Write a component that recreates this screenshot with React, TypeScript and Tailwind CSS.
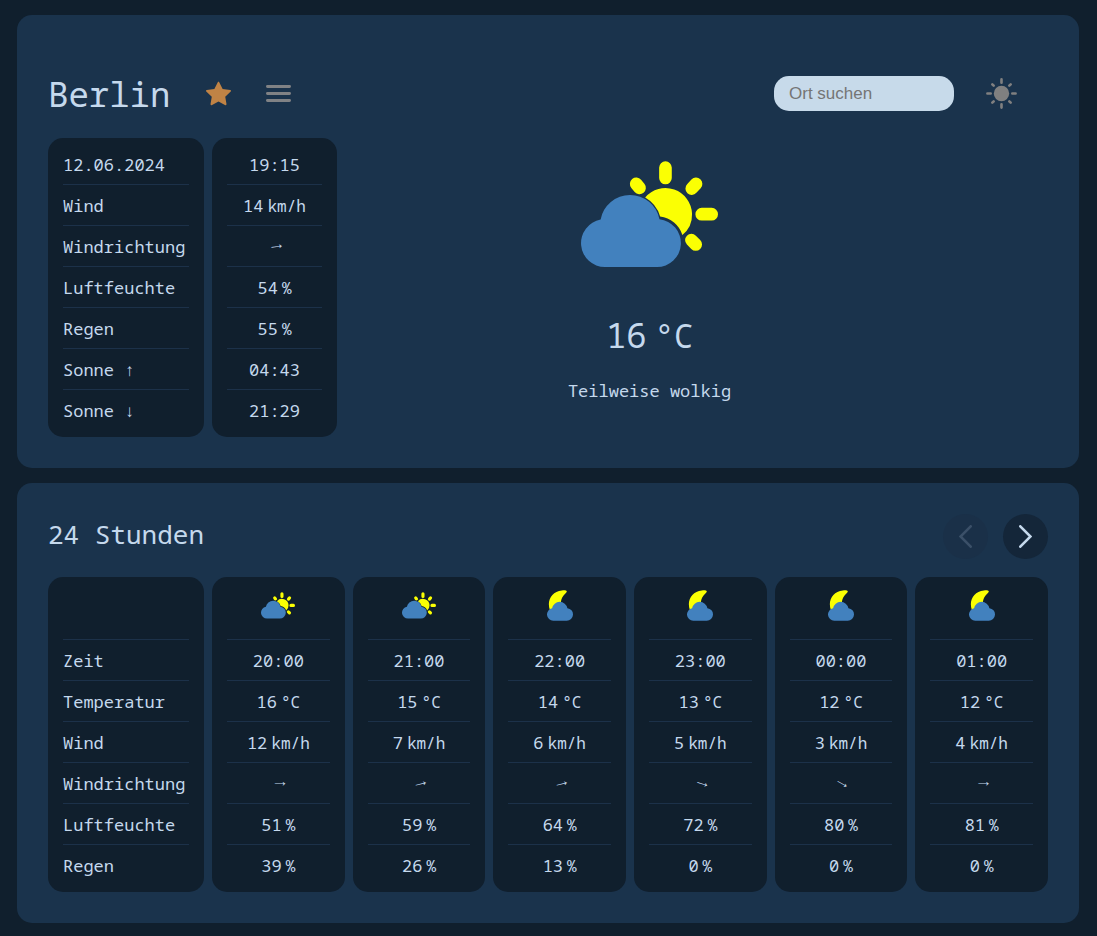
import type { ReactNode } from "react";
import { BsStarFill } from "react-icons/bs";

const CLOUD =
  "M135 351A72 72 0 0 1 122 208.200A90 90 0 0 1 299 207.400A72 72 0 0 1 291 351Z";

function CloudSun({ className }: { className: string }) {
  return (
    <svg viewBox="63 33 412 320" className={className} aria-hidden="true">
      <path
        d="M256 142A80 80 0 0 1 397 191A80 80 0 0 1 368 255A80 80 0 0 0 301 199A97 97 0 0 0 256 142Z"
        fill="#fbff03"
      />
      <path
        d="M317 52V83M426 192H456M396 115L409 101M229 101L239 113M395 270L408 283"
        stroke="#fbff03"
        strokeWidth="38"
        strokeLinecap="round"
      />
      <path d={CLOUD} fill="#4281be" />
    </svg>
  );
}

function CloudMoon({ className }: { className: string }) {
  return (
    <svg viewBox="198 59 79 93" className={className} aria-hidden="true">
      <path
        d="M258 62C259 65 256 67 253 70C245 78 241 86 240 97L222 120H207C196 90 213 63 243 60C250 59 256 59 258 62Z"
        fill="#fbff03"
      />
      <path d={CLOUD} transform="translate(181.400 59.200) scale(.263)" fill="#4281be" />
    </svg>
  );
}

function Sun() {
  return (
    <svg viewBox="-15.500 -15.500 31 31" className="size-[31px]" aria-hidden="true">
      <circle r="7.700" fill="currentColor" />
      <path
        d="M0-14.100V-10.800M0 14.100V10.800M-14.100 0H-10.800M14.100 0H10.800M-9.200-9.200L-7.800-7.800M9.200 9.200L7.800 7.800M-9.200 9.200L-7.800 7.800M9.200-9.200L7.800-7.800"
        stroke="currentColor"
        strokeWidth="2.600"
        strokeLinecap="round"
      />
    </svg>
  );
}

function Arrow({ turn }: { turn: number }) {
  return (
    <span
      className="ml-1 inline-block font-['Noto_Sans_Symbols','Noto_Sans',sans-serif] text-[15px] leading-[22px]"
      style={{ transform: `rotate(${turn}deg)` }}
    >
      →
    </span>
  );
}

function Value({ n, unit }: { n: number; unit: string }) {
  return (
    <span>
      {n}
      <span className="ml-1 text-[16px] leading-none">{unit}</span>
    </span>
  );
}

type RowData = { label: ReactNode; cells: ReactNode[]; tall?: boolean };

function WeatherTable({ rows, className }: { rows: RowData[]; className: string }) {
  return (
    <table
      className={`-mx-2 table-fixed border-separate border-spacing-x-2 border-spacing-y-0 text-[17px] leading-[23px] ${className}`}
    >
      <colgroup>
        <col className="w-[156px]" />
        {rows[0].cells.map((_, i) => (
          <col key={i} />
        ))}
      </colgroup>
      <tbody>
        {rows.map((row, r) => {
          const first = r === 0;
          const last = r === rows.length - 1;
          const cell = `bg-[#101f2d] px-[15px] ${first ? "rounded-t-[15px] pt-[6px]" : ""} ${
            last ? "rounded-b-[15px] pb-[6px]" : ""
          }`;
          const inner = `flex items-center whitespace-nowrap ${row.tall ? "h-[57px] pb-3" : "h-[41px]"} ${
            last ? "" : "border-b border-[#1c3149]"
          }`;
          return (
            <tr key={r}>
              <th scope="row" className={`${cell} text-left font-normal`}>
                <div className={inner}>{row.label}</div>
              </th>
              {row.cells.map((c, i) => (
                <td key={i} className={cell}>
                  <div className={`${inner} justify-center`}>{c}</div>
                </td>
              ))}
            </tr>
          );
        })}
      </tbody>
    </table>
  );
}

const hours = [
  { night: false, time: "20:00", temp: 16, wind: 12, dir: 0, hum: 51, rain: 39 },
  { night: false, time: "21:00", temp: 15, wind: 7, dir: -14, hum: 59, rain: 26 },
  { night: true, time: "22:00", temp: 14, wind: 6, dir: -14, hum: 64, rain: 13 },
  { night: true, time: "23:00", temp: 13, wind: 5, dir: 18, hum: 72, rain: 0 },
  { night: true, time: "00:00", temp: 12, wind: 3, dir: 30, hum: 80, rain: 0 },
  { night: true, time: "01:00", temp: 12, wind: 4, dir: 0, hum: 81, rain: 0 },
];

const nowRows: RowData[] = [
  { label: "12.06.2024", cells: ["19:15"] },
  { label: "Wind", cells: [<Value n={14} unit="km/h" />] },
  { label: "Windrichtung", cells: [<Arrow turn={-7} />] },
  { label: "Luftfeuchte", cells: [<Value n={54} unit="%" />] },
  { label: "Regen", cells: [<Value n={55} unit="%" />] },
  { label: "Sonne ↑", cells: ["04:43"] },
  { label: "Sonne ↓", cells: ["21:29"] },
];

const hourRows: RowData[] = [
  {
    label: "",
    tall: true,
    cells: hours.map((h) =>
      h.night ? <CloudMoon className="h-[31px] w-[26px]" /> : <CloudSun className="h-[27px] w-[34px]" />,
    ),
  },
  { label: "Zeit", cells: hours.map((h) => h.time) },
  { label: "Temperatur", cells: hours.map((h) => <Value n={h.temp} unit="°C" />) },
  { label: "Wind", cells: hours.map((h) => <Value n={h.wind} unit="km/h" />) },
  { label: "Windrichtung", cells: hours.map((h) => <Arrow turn={h.dir} />) },
  { label: "Luftfeuchte", cells: hours.map((h) => <Value n={h.hum} unit="%" />) },
  { label: "Regen", cells: hours.map((h) => <Value n={h.rain} unit="%" />) },
];

export default function App() {
  return (
    <div className="min-h-screen bg-[#101f2d] pt-[15px] pr-[18px] pb-[13px] pl-[17px] font-['Noto_Sans_Mono','DejaVu_Sans_Mono',monospace] text-[#c5d9ed]">
      <main className="flex flex-col gap-[15px]">
        <section className="rounded-[15px] bg-[#1a334c] px-[31px] pt-[61px] pb-[31px]">
          <header className="mb-[27px] flex h-[35px] items-center">
            <h1 className="text-[34px] leading-[34px]">Berlin</h1>
            <button type="button" aria-label="Favorit" className="ml-9 pb-px text-[#c08345]">
              <BsStarFill size={25} />
            </button>
            <button type="button" aria-label="Favoritenliste" className="ml-[35px]">
              <svg viewBox="0 0 25 17" className="h-[17px] w-[25px]" aria-hidden="true">
                <path
                  d="M1.400 1.500H23.600M1.400 8.500H23.600M1.400 15.500H23.600"
                  stroke="#808285"
                  strokeWidth="2.800"
                  strokeLinecap="round"
                />
              </svg>
            </button>
            <input
              type="text"
              aria-label="Ort suchen"
              placeholder="Ort suchen"
              className="ml-auto h-[35px] w-[180px] rounded-[15px] bg-[#c7daea] px-[15px] font-['Liberation_Sans',sans-serif] text-[17px] text-[#101f2d] placeholder:text-[#757575]"
            />
            <button type="button" aria-label="Helles Design" className="mr-[31px] ml-8 text-[#808080]">
              <Sun />
            </button>
          </header>
          <div className="flex">
            <WeatherTable rows={nowRows} className="w-[305px]" />
            <div className="mr-[102px] ml-4 flex flex-1 flex-col items-center pt-[23px]">
              <CloudSun className="h-[107px] w-[137px]" />
              <p className="mt-11 text-[34px] leading-[46px]">
                16<span className="ml-2 text-[32px] leading-none">°C</span>
              </p>
              <p className="mt-[21px] text-[17px] leading-[23px]">Teilweise wolkig</p>
            </div>
          </div>
        </section>

        <section className="rounded-[15px] bg-[#1a334c] p-[31px]">
          <header className="mb-[18px] flex h-[45px] items-start gap-[15px]">
            <h2 className="mr-auto text-[26px] leading-[41px]">24 Stunden</h2>
            <button
              type="button"
              disabled
              aria-label="Zurück"
              className="flex size-[45px] items-center justify-center rounded-full bg-[#1a3048] text-[#3b5068]"
            >
              <svg viewBox="0 0 13 23" className="h-[23px] w-[13px]" fill="none" aria-hidden="true">
                <path d="M11.700 1.300L1.500 11.500L11.700 21.700" stroke="currentColor" strokeWidth="2.600" strokeLinecap="round" />
              </svg>
            </button>
            <button
              type="button"
              aria-label="Weiter"
              className="flex size-[45px] items-center justify-center rounded-full bg-[#142639] text-[#c5d9ed]"
            >
              <svg viewBox="0 0 13 23" className="h-[23px] w-[13px]" fill="none" aria-hidden="true">
                <path d="M1.300 1.300L11.500 11.500L1.300 21.700" stroke="currentColor" strokeWidth="2.600" strokeLinecap="round" />
              </svg>
            </button>
          </header>
          <WeatherTable rows={hourRows} className="w-[calc(100%+16px)]" />
        </section>
      </main>
    </div>
  );
}
